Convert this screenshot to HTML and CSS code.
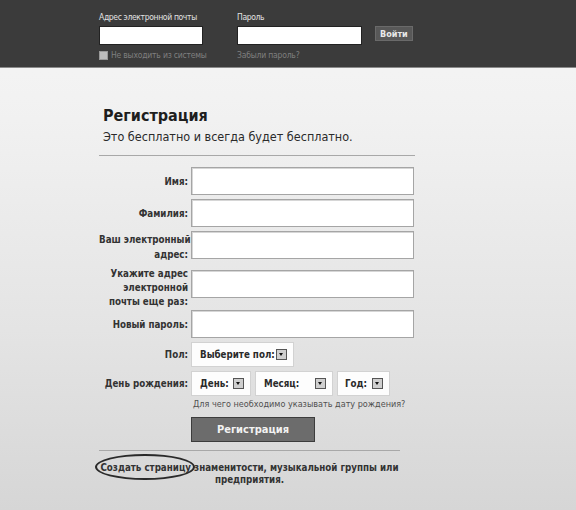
FILE: index.html
```html
<!DOCTYPE html>
<html lang="ru">
<head>
<meta charset="utf-8">
<title>Регистрация</title>
<link rel="stylesheet" href="styles.css">
</head>
<body>
<header class="topbar">
  <div class="login">
    <div class="login-col email-col">
      <label class="login-label">Адрес электронной почты</label>
      <input class="login-input" type="text">
      <div class="remember"><span class="check"></span>Не выходить из системы</div>
    </div>
    <div class="login-col pass-col">
      <label class="login-label">Пароль</label>
      <input class="login-input" type="password">
      <div class="forgot">Забыли пароль?</div>
    </div>
    <div class="login-col btn-col">
      <button class="login-btn">Войти</button>
    </div>
  </div>
</header>

<main class="page">
  <h1 class="title">Регистрация</h1>
  <p class="subtitle">Это бесплатно и всегда будет бесплатно.</p>
  <hr class="rule">

  <div class="form">
    <div class="row">
      <label class="lbl">Имя:</label>
      <input class="field" type="text">
    </div>
    <div class="row">
      <label class="lbl">Фамилия:</label>
      <input class="field" type="text">
    </div>
    <div class="row row-top">
      <label class="lbl">Ваш электронный<br>адрес:</label>
      <input class="field" type="text">
    </div>
    <div class="row row-top row-three">
      <label class="lbl">Укажите адрес<br>электронной<br>почты еще раз:</label>
      <input class="field field-low" type="text">
    </div>
    <div class="row">
      <label class="lbl">Новый пароль:</label>
      <input class="field" type="password">
    </div>
    <div class="row row-select">
      <label class="lbl">Пол:</label>
      <div class="selects">
        <div class="sel sel-sex"><span>Выберите пол:</span><span class="arrow"></span></div>
      </div>
    </div>
    <div class="row row-select">
      <label class="lbl">День рождения:</label>
      <div class="selects">
        <div class="sel sel-day"><span>День:</span><span class="arrow"></span></div>
        <div class="sel sel-month"><span>Месяц:</span><span class="arrow"></span></div>
        <div class="sel sel-year"><span>Год:</span><span class="arrow"></span></div>
      </div>
    </div>
    <div class="row row-hint">
      <span></span>
      <div class="hint">Для чего необходимо указывать дату рождения?</div>
    </div>
    <div class="row row-btn">
      <span></span>
      <div><button class="reg-btn">Регистрация</button></div>
    </div>
  </div>

  <hr class="rule rule-short">
  <p class="create"><span class="circled">Создать страницу</span> знаменитости, музыкальной группы или предприятия.</p>
</main>
</body>
</html>
```

FILE: styles.css
```css
html, body {
  margin: 0;
  padding: 0;
}
body {
  width: 576px;
  height: 510px;
  overflow: hidden;
  font-family: "DejaVu Sans Condensed", "DejaVu Sans", sans-serif;
  color: #2e2e2e;
  background: linear-gradient(to bottom, #f6f6f6 0px, #f1f1f1 120px, #e4e4e4 330px, #d6d6d6 510px);
}

/* ---------- top bar ---------- */
.topbar {
  height: 68px;
  background: #3b3b3b;
  border-bottom: 1px solid #8a8a8a;
  box-sizing: border-box;
  padding: 11px 0 0 99px;
}
.login {
  display: flex;
  align-items: flex-start;
}
.login-col {
  display: flex;
  flex-direction: column;
}
.email-col { width: 104px; margin-right: 34px; }
.pass-col { width: 125px; margin-right: 13px; }
.btn-col { padding-top: 15px; }
.login-label {
  font-size: 8.5px;
  letter-spacing: -0.35px;
  line-height: 12px;
  color: #e2e2e2;
  height: 15px;
  white-space: nowrap;
}
.login-input {
  box-sizing: border-box;
  height: 19px;
  width: 100%;
  margin: 0;
  border: 1px solid #222;
  background: #fff;
  padding: 0;
}
.remember, .forgot {
  margin-top: 5px;
  font-size: 8.5px;
  letter-spacing: -0.2px;
  line-height: 11px;
  color: #7f7f7f;
  display: flex;
  align-items: center;
  white-space: nowrap;
}
.check {
  flex: none;
  width: 9px;
  height: 9px;
  box-sizing: border-box;
  background: #bdbdbd;
  border: 1px solid #999;
  margin-right: 3px;
}
.login-btn {
  height: 15px;
  padding: 0 4px;
  font-family: inherit;
  font-size: 9px;
  font-weight: bold;
  color: #e8e8e8;
  background: #585858;
  border: 1px solid #6a6a6a;
  line-height: 12px;
}

/* ---------- page ---------- */
.page {
  width: 316px;
  margin-left: 99px;
  padding-top: 38px;
}
.title {
  margin: 0 0 0 4px;
  font-size: 16px;
  line-height: 20px;
  font-weight: bold;
  color: #1e1e1e;
}
.subtitle {
  margin: 3px 0 0 4px;
  font-size: 12.5px;
  line-height: 16px;
  color: #2a2a2a;
}
.rule {
  border: 0;
  border-top: 1px solid #a8a8a8;
  margin: 10px 0 0 0;
  height: 0;
}
.rule-short {
  width: 301px;
  margin-top: 8px;
}

.form {
  display: flex;
  flex-direction: column;
  gap: 4px;
  margin-top: 11px;
}
.row {
  display: grid;
  grid-template-columns: 89px 223px;
  column-gap: 3px;
  align-items: center;
}
.row-top { align-items: start; }
.lbl {
  text-align: right;
  font-size: 9.7px;
  line-height: 15px;
  font-weight: bold;
  color: #333;
  white-space: nowrap;
}
.row-top .lbl { margin-top: 1px; }
.row-three .lbl { line-height: 14px; margin: 1px 0 -3px 0; }
.field {
  box-sizing: border-box;
  height: 28px;
  width: 223px;
  margin: 0;
  padding: 0;
  background: #fff;
  border: 1px solid #a5a5a5;
  box-shadow: inset 1px 1px 0 #d6d6d6;
}
.field-low { margin-top: 4px; }

.selects {
  display: flex;
  gap: 4px;
}
.sel {
  box-sizing: border-box;
  height: 25px;
  background: #fdfdfd;
  border: 1px solid #d2d2d2;
  display: flex;
  align-items: center;
  justify-content: space-between;
  font-size: 9.7px;
  font-weight: bold;
  color: #2a2a2a;
  padding: 0 6px 0 8px;
  white-space: nowrap;
}
.sel-sex { width: 103px; }
.sel-day { width: 60px; }
.sel-month { width: 78px; }
.sel-year { width: 53px; padding-left: 7px; }
.arrow {
  position: relative;
  width: 11px;
  height: 11px;
  box-sizing: border-box;
  border: 1px solid #555;
  background: #cfcfcf;
  flex: none;
}
.arrow::after {
  content: "";
  position: absolute;
  left: 2px;
  top: 3px;
  border-left: 2.5px solid transparent;
  border-right: 2.5px solid transparent;
  border-top: 3px solid #111;
}
.hint {
  font-size: 9px;
  line-height: 12px;
  color: #505050;
  padding-left: 2px;
  white-space: nowrap;
}
.row-hint { margin-top: -2px; }
.row-btn { margin-top: 3px; }
.reg-btn {
  box-sizing: border-box;
  width: 124px;
  height: 25px;
  margin: 0;
  background: #6c6c6c;
  border: 1px solid #3c3c3c;
  color: #f2f2f2;
  font-family: inherit;
  font-size: 11px;
  font-weight: bold;
}

.create {
  width: 301px;
  margin: 11px 0 0 0;
  text-align: center;
  font-size: 9.7px;
  line-height: 12px;
  font-weight: bold;
  color: #333;
}
.circled {
  position: relative;
}
.circled::after {
  content: "";
  position: absolute;
  left: -5px;
  right: -4px;
  top: -8px;
  bottom: -7px;
  border: 2px solid #2a2a2a;
  border-radius: 50%;
}
```
